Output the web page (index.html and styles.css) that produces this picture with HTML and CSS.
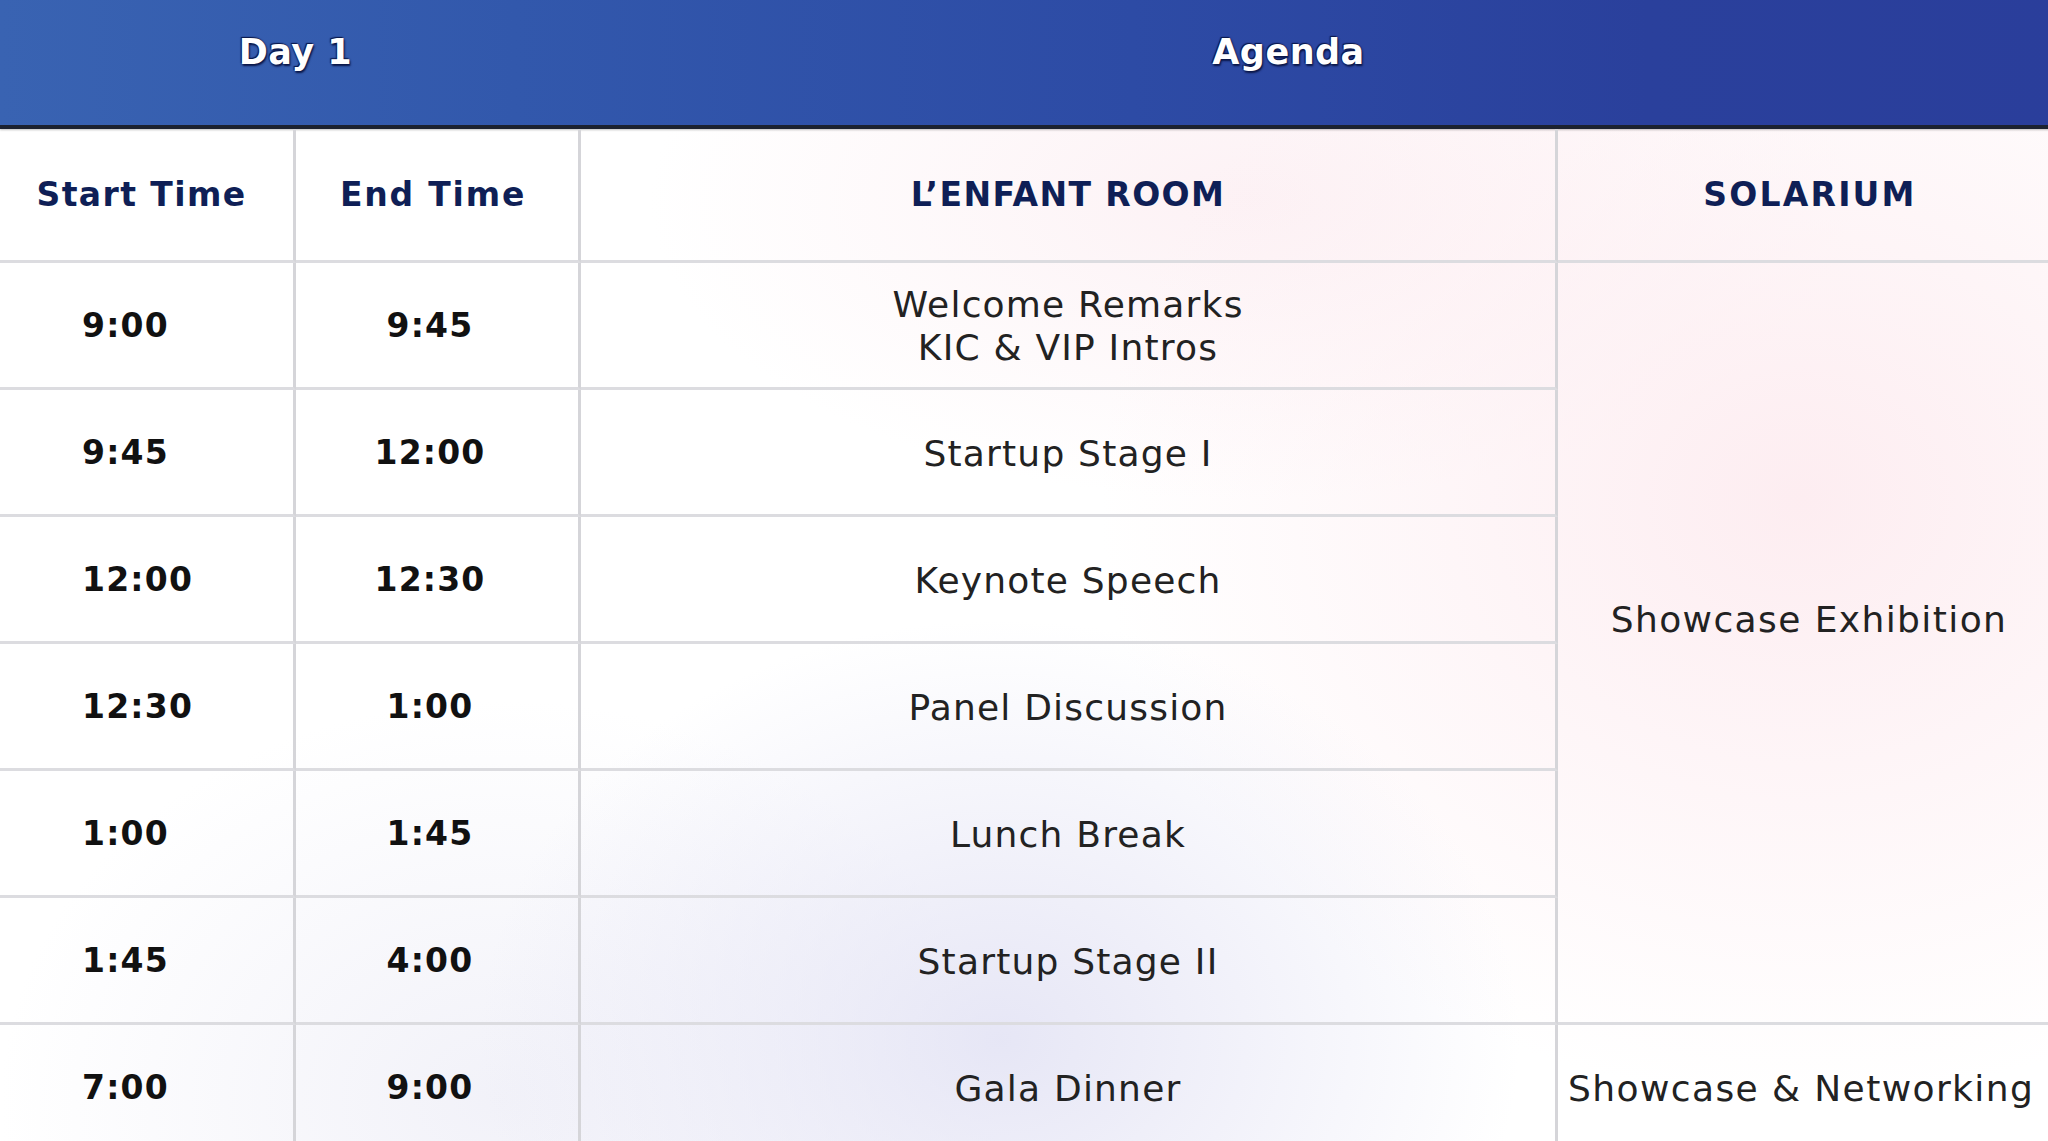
FILE: index.html
```html
<!DOCTYPE html>
<html lang="en">
<head>
<meta charset="utf-8">
<title>Day 1 Agenda</title>
<link rel="stylesheet" href="styles.css">
</head>
<body>
<div class="page">
  <header class="topbar">
    <div class="top-day">Day 1</div>
    <div class="top-agenda">Agenda</div>
  </header>
  <div class="grid">
    <div class="cell head c1">Start Time</div>
    <div class="cell head c2">End Time</div>
    <div class="cell head c3">L’ENFANT ROOM</div>
    <div class="cell head c4">SOLARIUM</div>

    <div class="cell time start">9:00</div>
    <div class="cell time end">9:45</div>
    <div class="cell event">Welcome Remarks<br>KIC &amp; VIP Intros</div>
    <div class="cell event solarium">Showcase Exhibition</div>

    <div class="cell time start">9:45</div>
    <div class="cell time end">12:00</div>
    <div class="cell event">Startup Stage I</div>

    <div class="cell time start">12:00</div>
    <div class="cell time end">12:30</div>
    <div class="cell event">Keynote Speech</div>

    <div class="cell time start">12:30</div>
    <div class="cell time end">1:00</div>
    <div class="cell event">Panel Discussion</div>

    <div class="cell time start">1:00</div>
    <div class="cell time end">1:45</div>
    <div class="cell event">Lunch Break</div>

    <div class="cell time start">1:45</div>
    <div class="cell time end">4:00</div>
    <div class="cell event">Startup Stage II</div>

    <div class="cell time start">7:00</div>
    <div class="cell time end">9:00</div>
    <div class="cell event">Gala Dinner</div>
    <div class="cell event last">Showcase &amp; Networking</div>
  </div>
</div>
</body>
</html>
```

FILE: styles.css
```css
* { box-sizing: border-box; }

html, body {
  margin: 0;
  padding: 0;
  width: 2048px;
  height: 1141px;
  overflow: hidden;
  background: #ffffff;
}

.page {
  width: 2060px;
  height: 1141px;
  font-family: "DejaVu Sans", "Noto Sans", sans-serif;
  display: flex;
  flex-direction: column;
  background:
    radial-gradient(ellipse 520px 420px at 1000px 1040px, rgba(226, 226, 244, 0.85), rgba(226, 226, 244, 0) 100%),
    radial-gradient(ellipse 700px 600px at 1800px 500px, rgba(253, 236, 240, 0.95), rgba(253, 236, 240, 0) 100%),
    radial-gradient(ellipse 600px 300px at 1250px 200px, rgba(252, 238, 242, 0.8), rgba(252, 238, 242, 0) 100%),
    radial-gradient(ellipse 500px 400px at 500px 1100px, rgba(236, 236, 246, 0.7), rgba(236, 236, 246, 0) 100%),
    #ffffff;
}

.topbar {
  height: 129px;
  flex: none;
  display: flex;
  background: linear-gradient(90deg, #3963b2 0%, #3258ac 25%, #2d4ba5 55%, #2a409c 80%, #2a3e9b 100%);
  border-bottom: 4px solid #1c2230;
  box-shadow: 0 1px 2px rgba(0, 0, 0, 0.25);
  color: #ffffff;
  font-weight: bold;
  font-size: 35px;
  letter-spacing: 0.5px;
  text-shadow: 0 0 2px #0b1748, 1px 2px 2px #0b1748, -1px -1px 1px #0b1748;
}

.top-day {
  width: 581px;
  display: flex;
  align-items: center;
  justify-content: center;
  padding-bottom: 22px;
  padding-left: 10px;
}

.top-agenda {
  flex: 1;
  display: flex;
  align-items: center;
  justify-content: center;
  padding-bottom: 22px;
  padding-right: 64px;
}

.grid {
  flex: 1;
  display: grid;
  grid-template-columns: 296px 285px 977px 502px;
  grid-template-rows: 134px repeat(7, 127px);
}

.cell {
  display: flex;
  align-items: center;
  justify-content: center;
  text-align: center;
  border-right: 3px solid #d5d5d9;
  border-bottom: 3px solid #dcdce0;
}

.head {
  color: #0f1f56;
  font-weight: bold;
  font-size: 33px;
  letter-spacing: 1.4px;
}

.head.c1 { padding-right: 10px; }
.head.c2 { padding-right: 8px; letter-spacing: 1.8px; }
.head.c4 { border-right: none; padding-left: 2px; letter-spacing: 2.2px; }

.time {
  color: #111111;
  font-weight: bold;
  font-size: 33px;
  letter-spacing: 1.2px;
}

.time.start {
  justify-content: flex-start;
  padding-left: 82px;
}

.time.end {
  padding-right: 14px;
}

.event {
  color: #222222;
  font-size: 36px;
  letter-spacing: 1.2px;
  line-height: 43px;
  padding-top: 2px;
}

.solarium {
  grid-column: 4;
  grid-row: 2 / span 6;
  border-right: none;
  padding-bottom: 48px;
  letter-spacing: 1.4px;
}

.last {
  border-right: none;
  justify-content: flex-start;
  padding-left: 10px;
  white-space: nowrap;
  letter-spacing: 1.4px;
}
```
